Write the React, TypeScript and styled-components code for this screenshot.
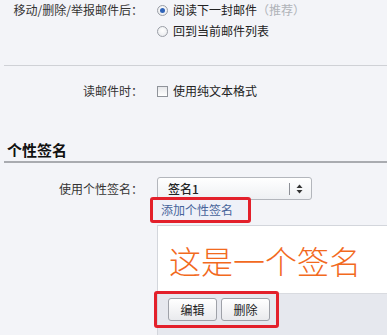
import React from "react";
import styled, { createGlobalStyle } from "styled-components";

const Global = createGlobalStyle`
  html, body { margin: 0; padding: 0; background: #f3f4f8; }
  body {
    font-family: "Noto Sans CJK SC", "Liberation Sans", sans-serif;
    font-size: 12px;
    color: #222;
    overflow: hidden;
  }
`;

const Page = styled.div`
  width: 387px;
  height: 335px;
  overflow: hidden;
  padding-left: 4px;
  box-sizing: border-box;
`;

const FormRow = styled.div<{ $mt?: number }>`
  display: grid;
  grid-template-columns: 139px 1fr;
  column-gap: 14px;
  margin-top: ${(p) => p.$mt ?? 0}px;
`;

const Label = styled.div<{ $h?: number }>`
  text-align: right;
  line-height: ${(p) => p.$h ?? 20}px;
  height: ${(p) => p.$h ?? 20}px;
  color: #333;
  white-space: nowrap;
`;

const Controls = styled.div`
  display: flex;
  flex-direction: column;
  gap: 1px;
  min-width: 0;
`;

const Option = styled.label`
  display: flex;
  align-items: center;
  gap: 5px;
  height: 20px;
  line-height: 20px;
  color: #222;
  white-space: nowrap;
`;

const Radio = styled.span<{ $checked?: boolean }>`
  width: 11px;
  height: 11px;
  border-radius: 50%;
  box-sizing: border-box;
  border: 1px solid #9a9ea6;
  background: radial-gradient(circle at 50% 40%, #ffffff 0%, #e4e6ea 100%);
  display: flex;
  align-items: center;
  justify-content: center;
  flex: none;
  &::after {
    content: "";
    width: 5px;
    height: 5px;
    border-radius: 50%;
    background: ${(p) => (p.$checked ? "#2f63b8" : "transparent")};
  }
`;

const Checkbox = styled.span`
  width: 11px;
  height: 11px;
  box-sizing: border-box;
  border: 1px solid #8f939a;
  background: linear-gradient(#e6e7ea, #ffffff);
  flex: none;
`;

const Hint = styled.span`
  color: #b0b3b9;
`;

const Divider = styled.div<{ $mt: number; $thick?: boolean }>`
  margin-top: ${(p) => p.$mt}px;
  height: ${(p) => (p.$thick ? 2 : 1)}px;
  background: ${(p) => (p.$thick ? "#a9abb0" : "#cfd1d6")};
`;

const Heading = styled.h2`
  margin: 38px 0 0;
  padding-left: 3px;
  font-size: 15px;
  font-weight: bold;
  line-height: 22px;
  height: 22px;
  color: #111;
`;

const Select = styled.div`
  width: 155px;
  height: 23px;
  box-sizing: border-box;
  border: 1px solid #b3b6bc;
  border-radius: 3px;
  background: linear-gradient(#ffffff, #eef0f3);
  display: flex;
  align-items: center;
  padding-left: 10px;
  color: #222;
`;

const SelectText = styled.span`
  flex: 1;
  font-weight: 500;
`;

const SelectSep = styled.span`
  width: 1px;
  height: 12px;
  background: #8d9096;
  margin-right: 6px;
`;

const SelectArrow = styled.svg`
  width: 7px;
  height: 10px;
  margin-right: 8px;
`;

const Annot = styled.div<{ $ml: number; $mt: number }>`
  border: 3.5px solid #e3202b;
  border-radius: 3px;
  margin-left: ${(p) => p.$ml}px;
  margin-top: ${(p) => p.$mt}px;
  width: fit-content;
  align-self: flex-start;
  position: relative;
`;

const LinkBox = styled.div`
  width: 87px;
  height: 20px;
  background: #eef1f8;
  padding-left: 8px;
  line-height: 20px;
`;

const Link = styled.a`
  color: #46639a;
  text-decoration: none;
`;

const SigBox = styled.div`
  margin-top: 1px;
  border-left: 1px solid #d3d6dc;
  border-top: 1px solid #d3d6dc;
  margin-right: -20px;
`;

const Preview = styled.div`
  height: 67px;
  background: #ffffff;
  display: flex;
  align-items: center;
  padding-left: 11px;
  color: #f26a1e;
  font-size: 32px;
  font-weight: 300;
  line-height: 1;
`;

const Toolbar = styled.div`
  background: #e6e8ee;
  height: 50px;
  border-top: 1px solid #d9dbe0;
`;

const ButtonGroup = styled.div`
  display: flex;
  gap: 4px;
  padding: 4px 6px 4px 11px;
`;

const Button = styled.button`
  width: 49px;
  height: 23px;
  box-sizing: border-box;
  border: 1px solid #9ea1a8;
  border-radius: 3px;
  background: linear-gradient(#ffffff, #e9eaed);
  font-family: inherit;
  font-size: 12px;
  color: #222;
  padding: 0;
  line-height: 21px;
`;

export default function App() {
  return (
    <>
      <Global />
      <Page>
        <FormRow>
          <Label>移动/删除/举报邮件后：</Label>
          <Controls>
            <Option>
              <Radio $checked />
              <span>
                阅读下一封邮件<Hint>（推荐）</Hint>
              </span>
            </Option>
            <Option>
              <Radio />
              <span>回到当前邮件列表</span>
            </Option>
          </Controls>
        </FormRow>
        <Divider $mt={24} />
        <FormRow $mt={15}>
          <Label>读邮件时：</Label>
          <Controls>
            <Option>
              <Checkbox />
              <span>使用纯文本格式</span>
            </Option>
          </Controls>
        </FormRow>
        <Heading>个性签名</Heading>
        <Divider $mt={0} $thick />
        <FormRow $mt={14}>
          <Label $h={23}>使用个性签名：</Label>
          <Controls>
            <Select>
              <SelectText>签名1</SelectText>
              <SelectSep />
              <SelectArrow viewBox="0 0 7 10">
                <path d="M3.5 0.5 L6.5 4 L0.5 4 Z" fill="#333" />
                <path d="M3.5 9.5 L6.5 6 L0.5 6 Z" fill="#333" />
              </SelectArrow>
            </Select>
            <Annot $ml={-7} $mt={-4}>
              <LinkBox>
                <Link href="#">添加个性签名</Link>
              </LinkBox>
            </Annot>
            <SigBox>
              <Preview>这是一个签名</Preview>
              <Toolbar>
                <Annot $ml={-4} $mt={-3}>
                  <ButtonGroup>
                    <Button>编辑</Button>
                    <Button>删除</Button>
                  </ButtonGroup>
                </Annot>
              </Toolbar>
            </SigBox>
          </Controls>
        </FormRow>
      </Page>
    </>
  );
}
